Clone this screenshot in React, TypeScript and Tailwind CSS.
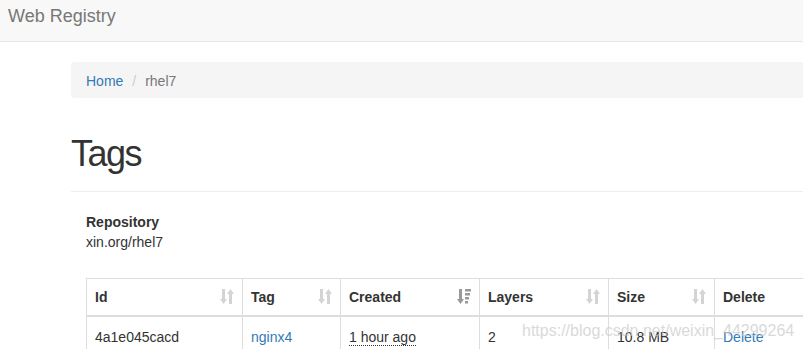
import React from "react";

const SortBoth = () => (
  <svg width="14" height="15" viewBox="0 0 14 15" className="absolute right-[8px] top-[10px]">
    <g fill="#d4d4d4">
      <rect x="2" y="0" width="3" height="11" />
      <polygon points="0,10 7,10 3.5,15" />
      <rect x="9" y="4" width="3" height="11" />
      <polygon points="7,5 14,5 10.5,0" />
    </g>
  </svg>
);

const SortDesc = () => (
  <svg width="14" height="15" viewBox="0 0 14 15" className="absolute right-[8px] top-[10px]">
    <g fill="#9a9a9a">
      <rect x="2" y="0" width="3" height="11" />
      <polygon points="0,10 7,10 3.5,15" />
      <rect x="8" y="0" width="6" height="2.5" />
      <rect x="8" y="4" width="5" height="2.5" />
      <rect x="8" y="8" width="4" height="2.5" />
      <rect x="8" y="12" width="3" height="2.5" />
    </g>
  </svg>
);

export default function App() {
  const font = { fontFamily: '"Liberation Sans", Arial, Helvetica, sans-serif' };
  const headers: { label: string; w: string; sort: "both" | "desc" | "none" }[] = [
    { label: "Id", w: "w-[156px]", sort: "both" },
    { label: "Tag", w: "w-[98px]", sort: "both" },
    { label: "Created", w: "w-[139px]", sort: "desc" },
    { label: "Layers", w: "w-[129px]", sort: "both" },
    { label: "Size", w: "w-[106px]", sort: "both" },
    { label: "Delete", w: "w-[140px]", sort: "none" },
  ];
  const td = "px-[8px] pt-[10px] pb-[6px] leading-[20px] border border-[#ddd]";
  return (
    <div className="relative w-full h-[349px] overflow-hidden bg-white text-[14px] text-[#333]" style={font}>
      <div className="h-[42px] bg-[#f8f8f8] border-b border-[#e7e7e7] pl-[8px] pt-[6px]">
        <div className="text-[18px] leading-[20px] text-[#777]">Web Registry</div>
      </div>
      <div className="w-[1200px] pl-[71px]">
        <div className="mt-[20px] h-[36px] rounded-[4px] bg-[#f5f5f5] px-[15px] pt-[9px] pb-[7px] leading-[20px] flex">
          <a className="text-[#337ab7]">Home</a>
          <span className="ml-[4px] px-[5px] text-[#ccc]">/&nbsp;</span>
          <span className="text-[#777]">rhel7</span>
        </div>
        <div className="mt-[36px] pb-[17px] border-b border-[#eee]">
          <h1 className="text-[36px] leading-[40px] font-normal tracking-[-1.5px]">Tags</h1>
        </div>
        <div className="pl-[15px] pt-[20px]">
          <div className="font-bold leading-[20px]">Repository</div>
          <div className="leading-[20px]">xin.org/rhel7</div>
          <table className="mt-[26px] table-fixed border-collapse border border-[#ddd]">
            <thead>
              <tr>
                {headers.map((h) => (
                  <th
                    key={h.label}
                    className={`${h.w} relative text-left font-bold leading-[20px] px-[8px] pt-[8px] pb-[8px] border border-[#ddd] border-b-2`}
                  >
                    {h.label}
                    {h.sort === "both" && <SortBoth />}
                    {h.sort === "desc" && <SortDesc />}
                  </th>
                ))}
              </tr>
            </thead>
            <tbody>
              <tr>
                <td className={td}>4a1e045cacd</td>
                <td className={td}>
                  <a className="text-[#337ab7]">nginx4</a>
                </td>
                <td className={td}>
                  <abbr className="no-underline border-b border-dotted border-[#333]" title="">1 hour ago</abbr>
                </td>
                <td className={td}>2</td>
                <td className={td}>10.8 MB</td>
                <td className={td}>
                  <a className="text-[#337ab7]">Delete</a>
                </td>
              </tr>
            </tbody>
          </table>
        </div>
      </div>
      <div className="absolute left-[522px] top-[322px] text-[16px] leading-[18px] text-[#c8c8c8]/70 whitespace-nowrap pointer-events-none">
        https://blog.csdn.net/weixin_44299264
      </div>
    </div>
  );
}
